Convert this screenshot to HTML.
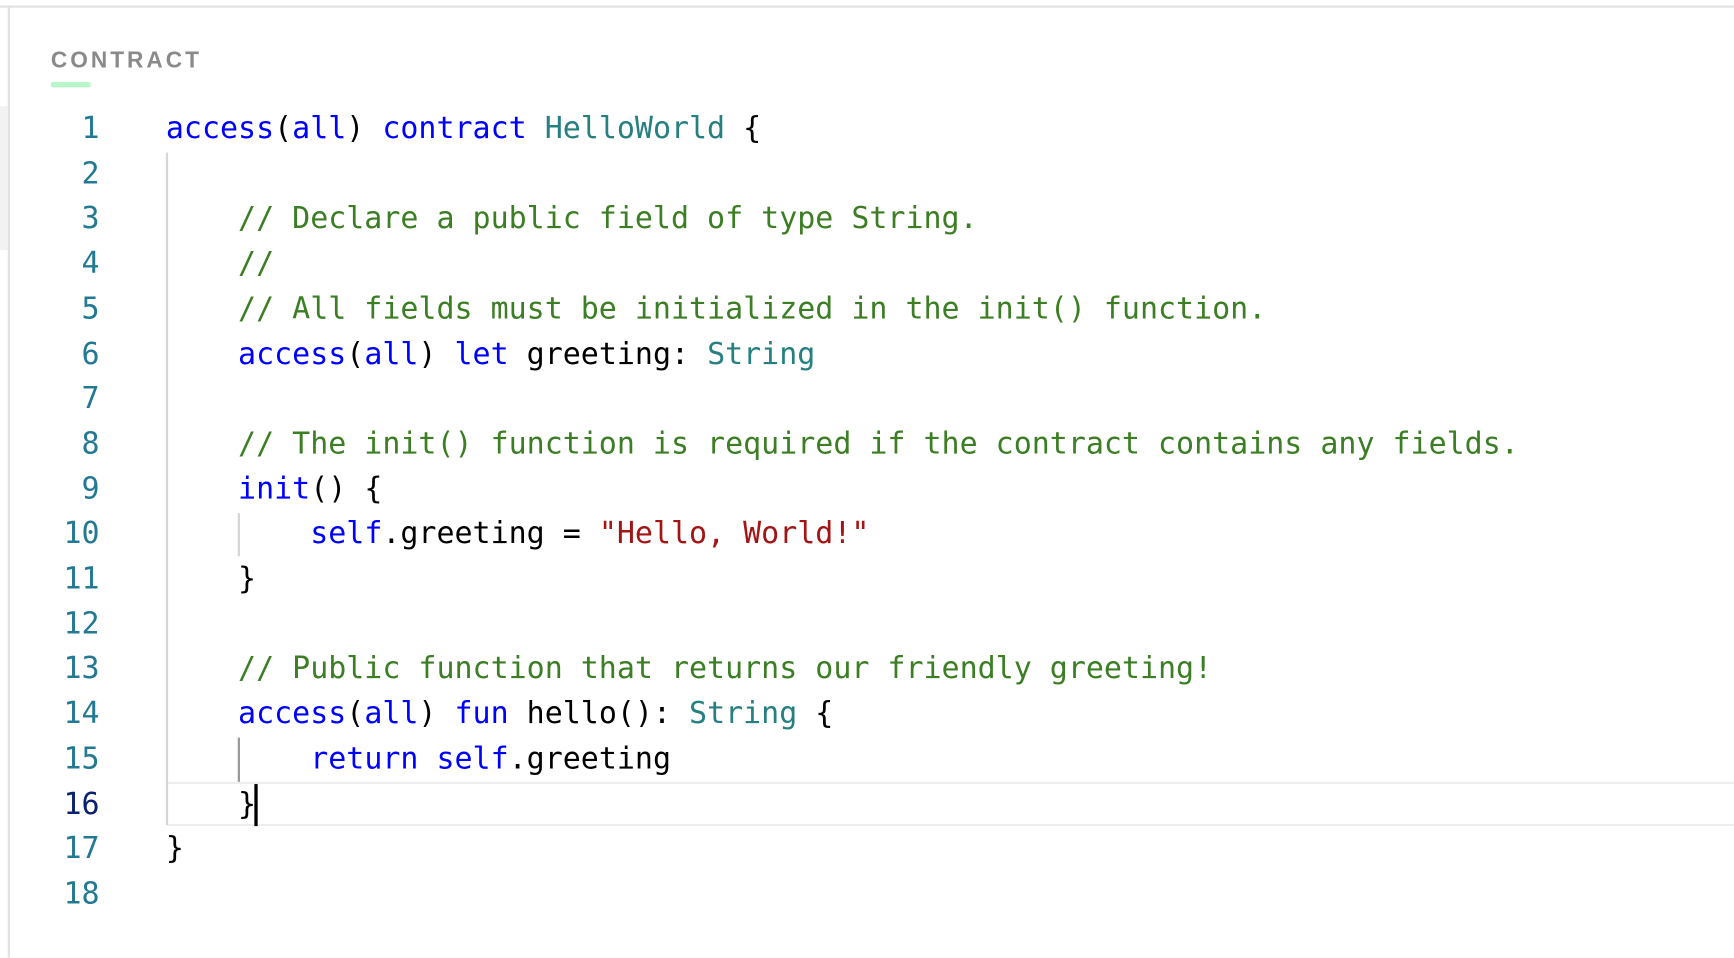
<!DOCTYPE html>
<html><head><meta charset="utf-8"><style>
html,body{margin:0;padding:0;background:#fff;width:1734px;height:950px;overflow:hidden}
#w{position:absolute;left:0;top:0;width:1568px;height:860px;transform:scale(1.10587);transform-origin:0 0}
.top{position:absolute;left:0;top:5px;width:1568px;height:2px;background:#e2e2e2}
.lv{position:absolute;left:7px;top:6px;width:2px;height:860px;background:#e2e2e2}
.strip{position:absolute;left:0;top:96px;width:7px;height:130px;background:#f2f2f2}
.lab{position:absolute;left:46px;top:43px;font:bold 20.5px "Liberation Sans",sans-serif;letter-spacing:2.7px;color:#8a8a8a}
.ul{position:absolute;left:46px;top:74px;width:36px;height:5px;background:#b8f5c8;border-radius:2px}
.code{position:absolute;left:0;top:97px;font-family:"DejaVu Sans Mono",monospace;font-size:27.1px}
.ln{position:absolute;left:0;width:90px;text-align:right;color:#237893;height:40.7px;line-height:40.7px}
.tx{position:absolute;left:150px;white-space:pre;color:#000;height:40.7px;line-height:40.7px}
.k{color:#0000ff}.c{color:#3b7e24}.t{color:#267f80}.s{color:#a31515}
.g{position:absolute;width:2px;background:#d6d6d6}
.hl{position:absolute;left:151px;top:707px;width:1417px;height:36px;border-top:2px solid #eee;border-bottom:2px solid #eee}
.cur{position:absolute;left:230px;top:709px;width:2.5px;height:38px;background:#000}
</style></head><body><div id="w">
<div class="top"></div><div class="lv"></div><div class="strip"></div>
<div class="lab">CONTRACT</div><div class="ul"></div>
<div class="hl"></div>
<div class="g" style="left:150px;top:138px;height:608px"></div>
<div class="g" style="left:215px;top:464px;height:39px"></div>
<div class="g" style="left:215px;top:667px;height:40px;background:#999"></div>
<div class="code">
<div class="ln" style="top:0">1</div><div class="tx" style="top:0"><span class="k">access</span>(<span class="k">all</span>) <span class="k">contract</span> <span class="t">HelloWorld</span> {</div>
<div class="ln" style="top:40.7px">2</div>
<div class="ln" style="top:81.4px">3</div><div class="tx c" style="top:81.4px">    // Declare a public field of type String.</div>
<div class="ln" style="top:122.1px">4</div><div class="tx c" style="top:122.1px">    //</div>
<div class="ln" style="top:162.8px">5</div><div class="tx c" style="top:162.8px">    // All fields must be initialized in the init() function.</div>
<div class="ln" style="top:203.5px">6</div><div class="tx" style="top:203.5px">    <span class="k">access</span>(<span class="k">all</span>) <span class="k">let</span> greeting: <span class="t">String</span></div>
<div class="ln" style="top:244.2px">7</div>
<div class="ln" style="top:284.9px">8</div><div class="tx c" style="top:284.9px">    // The init() function is required if the contract contains any fields.</div>
<div class="ln" style="top:325.6px">9</div><div class="tx" style="top:325.6px">    <span class="k">init</span>() {</div>
<div class="ln" style="top:366.3px">10</div><div class="tx" style="top:366.3px">        <span class="k">self</span>.greeting = <span class="s">"Hello, World!"</span></div>
<div class="ln" style="top:407px">11</div><div class="tx" style="top:407px">    }</div>
<div class="ln" style="top:447.7px">12</div>
<div class="ln" style="top:488.4px">13</div><div class="tx c" style="top:488.4px">    // Public function that returns our friendly greeting!</div>
<div class="ln" style="top:529.1px">14</div><div class="tx" style="top:529.1px">    <span class="k">access</span>(<span class="k">all</span>) <span class="k">fun</span> hello(): <span class="t">String</span> {</div>
<div class="ln" style="top:569.8px">15</div><div class="tx" style="top:569.8px">        <span class="k">return</span> <span class="k">self</span>.greeting</div>
<div class="ln" style="top:610.5px;color:#0b216f">16</div><div class="tx" style="top:610.5px">    }</div>
<div class="ln" style="top:651.2px">17</div><div class="tx" style="top:651.2px">}</div>
<div class="ln" style="top:691.9px">18</div>
</div>
<div class="cur"></div>
</div></body></html>
